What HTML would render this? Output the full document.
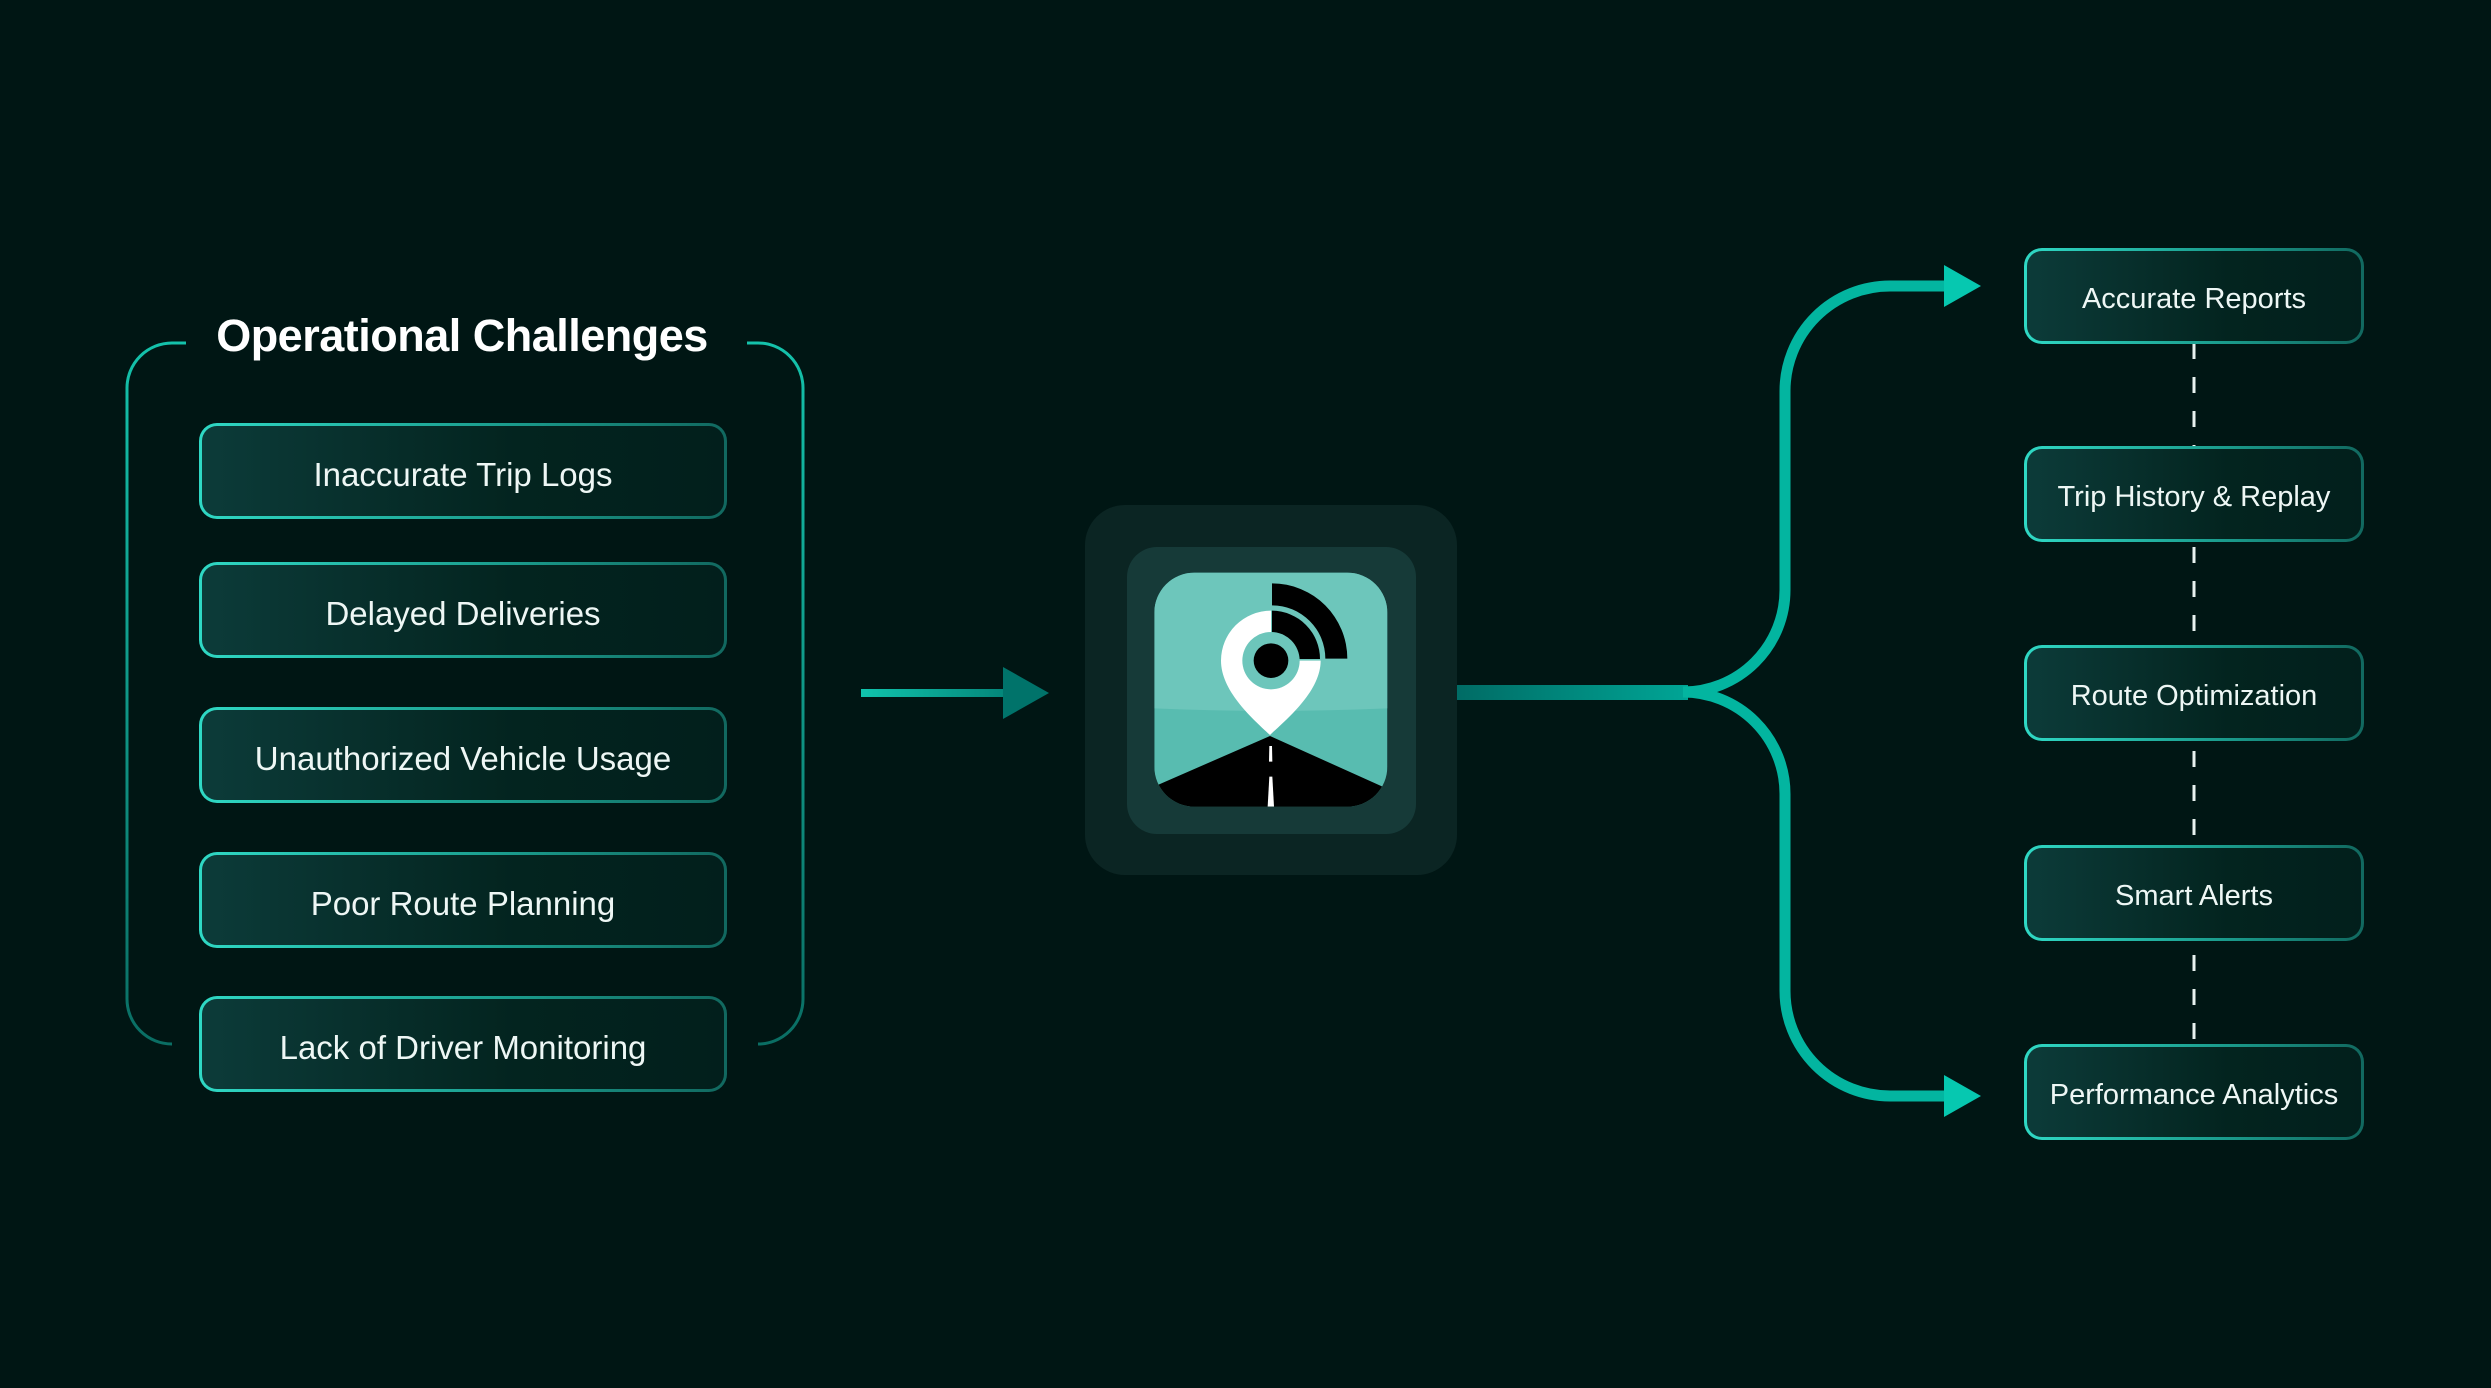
<!DOCTYPE html>
<html><head><meta charset="utf-8"><style>
html,body{margin:0;padding:0;background:#001614;}
body{width:2491px;height:1388px;position:relative;overflow:hidden;font-family:"Liberation Sans",sans-serif;}
.box{position:absolute;box-sizing:border-box;border-radius:18px;padding:3px;background:linear-gradient(90deg,#2fd8c4,#1a9a8b 60%,#11685f);}
.box>div{box-sizing:border-box;padding-top:7px;width:100%;height:100%;border-radius:15px;background:linear-gradient(90deg,#0c3b39,#03241f 60%,#021f1c);display:flex;align-items:center;justify-content:center;color:#eef7f5;}
.l{left:199px;width:528px;height:96px;}
.l>div{font-size:33px;}
.r{left:2024px;width:340px;height:96px;}
.r>div{font-size:29px;}
.title{position:absolute;left:190px;width:544px;top:310px;text-align:center;color:#fff;font-size:45px;font-weight:bold;letter-spacing:-0.5px;}
</style></head><body>
<svg width="2491" height="1388" style="position:absolute;left:0;top:0">
<defs>
<linearGradient id="conn" x1="1387" y1="0" x2="1700" y2="0" gradientUnits="userSpaceOnUse"><stop offset="0" stop-color="#005a56"/><stop offset="1" stop-color="#00a898"/></linearGradient>
<linearGradient id="arr" x1="861" y1="0" x2="1049" y2="0" gradientUnits="userSpaceOnUse"><stop offset="0" stop-color="#10c4ad"/><stop offset="1" stop-color="#00736a"/></linearGradient>
<linearGradient id="brk" x1="0" y1="342" x2="0" y2="1044" gradientUnits="userSpaceOnUse"><stop offset="0" stop-color="#14c2ab"/><stop offset="1" stop-color="#0a6e64"/></linearGradient>
</defs>
<path d="M186 343 L172 343 A45 45 0 0 0 127 388 L127 999 A45 45 0 0 0 172 1044" fill="none" stroke="url(#brk)" stroke-width="3"/>
<path d="M747 343 L758 343 A45 45 0 0 1 803 388 L803 999 A45 45 0 0 1 758 1044" fill="none" stroke="url(#brk)" stroke-width="3"/>
<rect x="861" y="689" width="145" height="8" fill="url(#arr)"/>
<polygon points="1003,667 1049,693 1003,719" fill="#00736a"/>
<rect x="1388" y="685" width="300" height="15" fill="url(#conn)"/>
<path d="M1683 692 A102 102 0 0 0 1785 590 L1785 391 A105 105 0 0 1 1890 286 L1948 286" fill="none" stroke="#03b5a0" stroke-width="11"/>
<path d="M1683 692 A102 102 0 0 1 1785 794 L1785 991 A105 105 0 0 0 1890 1096 L1948 1096" fill="none" stroke="#03b5a0" stroke-width="11"/>
<polygon points="1944,265 1981,286 1944,307" fill="#06c8b0"/>
<polygon points="1944,1075 1981,1096 1944,1117" fill="#06c8b0"/>
<line x1="2194" y1="343" x2="2194" y2="1044" stroke="#e8f2f0" stroke-width="3" stroke-dasharray="16 18"/>
<rect x="1085" y="505" width="372" height="370" rx="40" fill="#0b2523"/>
<rect x="1127" y="547" width="289" height="287" rx="30" fill="#163a38"/>
<svg x="1070" y="490" width="400" height="400" viewBox="0 0 1200 1200">
<defs><clipPath id="app"><rect x="253" y="248" width="699" height="702" rx="120"/></clipPath></defs>
<g clip-path="url(#app)">
<rect x="253" y="248" width="699" height="702" fill="#58bcb0"/>
<path d="M253 248 H952 V655 Q600 670 253 655 Z" fill="#6dc6bb"/>
<polygon points="600,738 960,900 960,960 240,960 240,895" fill="#000"/>
<polygon points="598,768 606,768 607,815 597,815" fill="#fff"/>
<polygon points="598,860 607,860 612,950 593,950" fill="#fff"/>
<path d="M603 362 A150 150 0 0 0 453 512 C453 600 540 680 600 735 C660 680 752 600 752 512 L603 512 Z" fill="#fff"/>
<path d="M606 362 A145 145 0 0 1 750 507 L606 507 Z" fill="#000"/>
<path d="M606 280 A226 226 0 0 1 832 506 L766 506 A160 160 0 0 0 606 346 Z" fill="#000"/>
<circle cx="603" cy="512" r="86" fill="#6dc6bb"/>
<circle cx="603" cy="512" r="52" fill="#000"/>
</g>
</svg>
</svg>
<div class="title">Operational Challenges</div>
<div class="box l" style="top:423px"><div>Inaccurate Trip Logs</div></div>
<div class="box l" style="top:562px"><div>Delayed Deliveries</div></div>
<div class="box l" style="top:707px"><div>Unauthorized Vehicle Usage</div></div>
<div class="box l" style="top:852px"><div>Poor Route Planning</div></div>
<div class="box l" style="top:996px"><div>Lack of Driver Monitoring</div></div>
<div class="box r" style="top:248px"><div>Accurate Reports</div></div>
<div class="box r" style="top:446px"><div>Trip History &amp; Replay</div></div>
<div class="box r" style="top:645px"><div>Route Optimization</div></div>
<div class="box r" style="top:845px"><div>Smart Alerts</div></div>
<div class="box r" style="top:1044px"><div>Performance Analytics</div></div>
</body></html>
